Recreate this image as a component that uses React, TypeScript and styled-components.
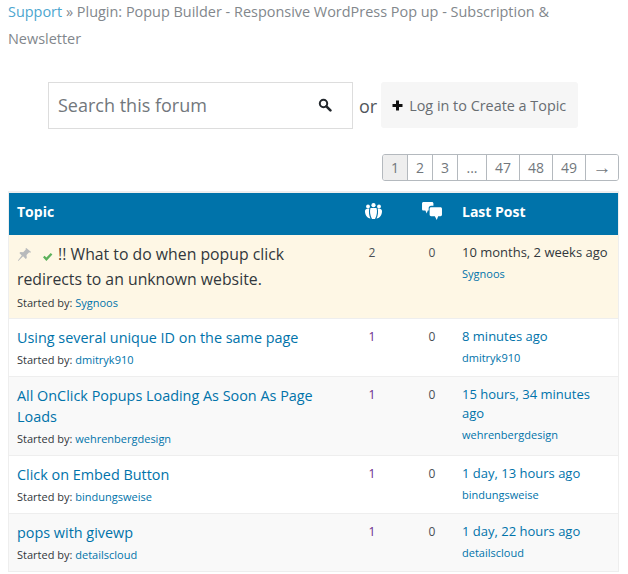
import styled, { createGlobalStyle } from "styled-components";

const GlobalStyle = createGlobalStyle`
  html, body {
    margin: 0;
    padding: 0;
    background: #fff;
    overflow: hidden;
  }
  body {
    font-family: "Open Sans", sans-serif;
    color: #32373c;
  }
`;

const Page = styled.div`
  width: 628px;
  height: 574px;
  box-sizing: border-box;
  padding: 0 9px 0 8px;
  overflow: hidden;
`;

const Breadcrumb = styled.div`
  display: flow-root;
  font-size: 14.45px;
  line-height: 27px;
  color: #82878c;
  height: 82px;
`;

const CrumbText = styled.div`
  margin-top: -2px;
`;

const Link = styled.a`
  color: #0073aa;
  text-decoration: none;
`;

const CrumbLink = styled(Link)`
  color: #4ca6cf;
`;

const SearchRow = styled.div`
  display: flex;
  align-items: center;
  height: 47px;
  padding-left: 40px;
`;

const SearchBox = styled.div`
  width: 305px;
  height: 47px;
  box-sizing: border-box;
  border: 1px solid #ddd;
  display: flex;
  align-items: center;
  justify-content: space-between;
  padding: 0 20px 2px 9px;
  font-size: 18px;
  color: #72777c;
`;

const OrLabel = styled.span`
  font-size: 18px;
  color: #51565b;
  margin: 0 4px 0 6px;
`;

const CreateButton = styled.div`
  width: 197px;
  height: 46px;
  margin-bottom: 1px;
  box-sizing: border-box;
  background: #f6f6f6;
  border-radius: 3px;
  display: flex;
  align-items: center;
  gap: 6px;
  padding-left: 11px;
  font-size: 14.4px;
  color: #686d72;
`;

const Pager = styled.div`
  display: flex;
  justify-content: flex-end;
  margin-top: 25px;
  height: 27px;
`;

const PagerGroup = styled.div`
  display: flex;
  border: 1px solid #b4b9be;
  border-radius: 3px;
  overflow: hidden;
`;

const PageCell = styled.span<{ $active?: boolean; $w: number }>`
  width: ${(p) => p.$w}px;
  box-sizing: border-box;
  display: flex;
  align-items: center;
  justify-content: center;
  font-size: 14px;
  color: #72777c;
  background: ${(p) => (p.$active ? "#eeeeee" : "#fff")};
  border-right: 1px solid #b4b9be;
  &:last-child {
    border-right: 0;
    font-family: "Liberation Sans", sans-serif;
    font-size: 19px;
  }
`;

const Forum = styled.div`
  margin-top: 10px;
  border-top: 1px solid #eee;
  border-right: 1px solid #eee;
  border-left: 1px solid #eee;
`;

const Grid = styled.div<{ $h: number; $bg?: string }>`
  display: grid;
  grid-template-columns: 333px 60px 60px 1fr;
  min-height: ${(p) => p.$h}px;
  box-sizing: border-box;
  background: ${(p) => p.$bg || "#fff"};
`;

const HeaderRow = styled(Grid)`
  background: #0073aa;
  border-top: 1px solid #eee;
  color: #fff;
  font-size: 14px;
  font-weight: 700;
  align-items: center;
  padding-bottom: 6px;
`;

const HeaderCell = styled.div<{ $center?: boolean; $flush?: boolean }>`
  padding: 0 ${(p) => (p.$flush ? 0 : 8)}px;
  display: flex;
  justify-content: ${(p) => (p.$center ? "center" : "flex-start")};
`;

const TopicRow = styled(Grid)`
  border-bottom: 1px solid #eee;
`;

const TopicCell = styled.div`
  padding: 8px 8px 0;
`;

const TopicTitle = styled(Link)<{ $big?: boolean }>`
  display: block;
  font-size: ${(p) => (p.$big ? "15.8px" : "14.4px")};
  line-height: ${(p) => (p.$big ? "23px" : "21px")};
  color: ${(p) => (p.$big ? "#32373c" : "#0073aa")};
`;

const Meta = styled.div`
  font-size: 11px;
  line-height: 16px;
  margin-top: 4px;
  color: #32373c;
`;

const Count = styled.div<{ $color?: string }>`
  padding-top: 9px;
  text-align: center;
  font-size: 12px;
  line-height: 18px;
  color: ${(p) => p.$color || "#4a4f54"};
`;

const LastPost = styled.div`
  padding: 8px 8px 0 0;
`;

const LastTime = styled(Link)<{ $dark?: boolean }>`
  display: block;
  font-size: 13px;
  line-height: 19px;
  color: ${(p) => (p.$dark ? "#32373c" : "#0073aa")};
`;

const Author = styled(Link)`
  display: block;
  font-size: 11px;
  line-height: 16px;
  margin-top: 4px;
`;

const IconSlot = styled.span<{ $gap: number }>`
  display: inline-block;
  vertical-align: -2px;
  margin-right: ${(p) => p.$gap}px;
`;

const UsersSvg = styled.svg`
  margin-left: 2px;
`;

const SearchIcon = () => (
  <svg width="14" height="14" viewBox="0 0 14 14">
    <circle cx="5.5" cy="5.5" r="3.7" fill="none" stroke="#23282d" strokeWidth="2" />
    <path d="M8.4 8.4 L12.4 12.4" stroke="#23282d" strokeWidth="2.6" strokeLinecap="round" />
  </svg>
);

const PlusIcon = () => (
  <svg width="11" height="11" viewBox="0 0 11 11">
    <path d="M4 .5h3v3.500h3.500v3H7v3.500H4V7H.5V4H4z" fill="#111" />
  </svg>
);

const PinIcon = () => (
  <svg width="15" height="15" viewBox="0 0 17 17">
    <path
      d="M10.500 1l5.500 4.800-1.200.8-1-.6-3 3.200.3 3.200-1.200 1.200-3-3L1.500 16 1 15.300l4.400-5.600-2.700-2.800L4 5.600l3 .3 3-3.100-.4-.8z"
      fill="#b8babc"
    />
  </svg>
);

const CheckIcon = () => (
  <svg width="11" height="10" viewBox="0 0 11 10">
    <path d="M1 5.200l1.600-1.500L4.400 5.600 8.700 1 10.400 2.500 4.400 9z" fill="#5cb15c" />
  </svg>
);

const UsersIcon = () => (
  <UsersSvg width="17" height="16" viewBox="0 0 17 16" fill="#fff">
    <circle cx="3" cy="3.400" r="1.900" />
    <circle cx="8.500" cy="2.200" r="2.100" />
    <circle cx="14" cy="3.400" r="1.900" />
    <path d="M0 8c0-1.500 1.500-2.500 3-2.500h1.300C3.600 9 4 12.500 5.500 15.500 2 15 0 12 0 8z" />
    <path d="M17 8c0-1.500-1.500-2.500-3-2.500h-1.300c.7 3.500.3 7-1.200 10 3.500-.5 5.500-3.500 5.500-7.500z" />
    <path d="M5.500 5h6c1 3 .5 7.500-1.500 11H7C5 12.500 4.500 8 5.500 5z" />
  </UsersSvg>
);

const BubblesIcon = () => (
  <svg width="20" height="19" viewBox="0 0 21 20" fill="#fff">
    <path d="M1.500 0h9c.8 0 1.500.7 1.500 1.500V4H9.500C8 4 7 5 7 6.500V9H6l-1 3-1.500-3h-2C.7 9 0 8.300 0 7.500v-6C0 .7.700 0 1.500 0z" />
    <path d="M9.500 5.500h10c.8 0 1.500.7 1.500 1.500v6.500c0 .8-.7 1.500-1.500 1.500H17l-1.500 4-2-4h-4c-.8 0-1.500-.7-1.500-1.500V7c0-.8.700-1.500 1.500-1.500z" />
  </svg>
);

const topics = [
  { title: "Using several unique ID on the same page", by: "dmitryk910", time: "8 minutes ago", h: 58, bg: "#fff" },
  { title: "All OnClick Popups Loading As Soon As Page Loads", by: "wehrenbergdesign", time: "15 hours, 34 minutes ago", h: 79, bg: "#f9f9f9" },
  { title: "Click on Embed Button", by: "bindungsweise", time: "1 day, 13 hours ago", h: 58, bg: "#fff" },
  { title: "pops with givewp", by: "detailscloud", time: "1 day, 22 hours ago", h: 58, bg: "#f9f9f9" },
];

const pages: [string, number][] = [
  ["1", 25], ["2", 25], ["3", 25], ["...", 29], ["47", 33], ["48", 33], ["49", 33], ["→", 32],
];

export default function App() {
  return (
    <Page>
      <GlobalStyle />
      <Breadcrumb>
        <CrumbText>
          <CrumbLink href="#">Support</CrumbLink> » Plugin: Popup Builder - Responsive WordPress Pop up - Subscription &amp;
          <br />
          Newsletter
        </CrumbText>
      </Breadcrumb>
      <SearchRow>
        <SearchBox>
          Search this forum
          <SearchIcon />
        </SearchBox>
        <OrLabel>or</OrLabel>
        <CreateButton>
          <PlusIcon />
          Log in to Create a Topic
        </CreateButton>
      </SearchRow>
      <Pager>
        <PagerGroup>
          {pages.map(([label, w], i) => (
            <PageCell key={label} $w={w} $active={i === 0}>
              {label}
            </PageCell>
          ))}
        </PagerGroup>
      </Pager>
      <Forum>
        <HeaderRow $h={43}>
          <HeaderCell>Topic</HeaderCell>
          <HeaderCell $center><UsersIcon /></HeaderCell>
          <HeaderCell $center><BubblesIcon /></HeaderCell>
          <HeaderCell $flush>Last Post</HeaderCell>
        </HeaderRow>
        <TopicRow $h={84} $bg="#fef7e5">
          <TopicCell>
            <TopicTitle $big href="#">
              <IconSlot $gap={10}><PinIcon /></IconSlot>
              <IconSlot $gap={1}><CheckIcon /></IconSlot> !! What to do when popup click redirects to an unknown website.
            </TopicTitle>
            <Meta>Started by: <Link href="#">Sygnoos</Link></Meta>
          </TopicCell>
          <Count>2</Count>
          <Count>0</Count>
          <LastPost>
            <LastTime $dark href="#">10 months, 2 weeks ago</LastTime>
            <Author href="#">Sygnoos</Author>
          </LastPost>
        </TopicRow>
        {topics.map((t) => (
          <TopicRow key={t.title} $h={t.h} $bg={t.bg}>
            <TopicCell>
              <TopicTitle href="#">{t.title}</TopicTitle>
              <Meta>Started by: <Link href="#">{t.by}</Link></Meta>
            </TopicCell>
            <Count $color="#6b2d8b">1</Count>
            <Count>0</Count>
            <LastPost>
              <LastTime href="#">{t.time}</LastTime>
              <Author href="#">{t.by}</Author>
            </LastPost>
          </TopicRow>
        ))}
      </Forum>
    </Page>
  );
}
